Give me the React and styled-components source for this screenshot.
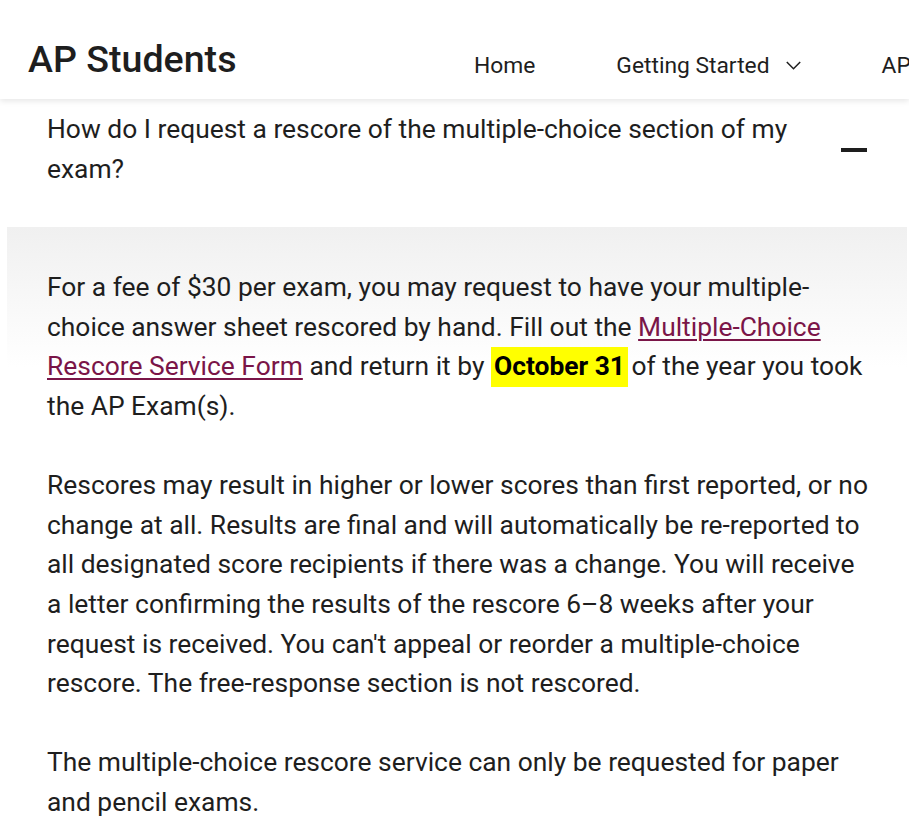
import React from "react";
import styled, { createGlobalStyle } from "styled-components";

const Global = createGlobalStyle`
  html, body { margin: 0; padding: 0; background: #fff; overflow: hidden; }
  body { font-family: Roboto, "Noto Sans", "Liberation Sans", sans-serif; color: #1e1e1e; }
`;

const Header = styled.header`
  position: relative;
  z-index: 2;
  height: 99px;
  background: #fff;
  box-shadow: 0 2px 6px rgba(0, 0, 0, 0.1);
  display: flex;
  align-items: flex-start;
  padding-left: 28px;
  overflow: hidden;
  white-space: nowrap;
`;

const Logo = styled.div`
  font-size: 37.6px;
  font-weight: 500;
  color: #1e1e1e;
  margin-top: 37px;
  flex-shrink: 0;
  width: 446px;
`;

const Nav = styled.nav`
  display: flex;
  align-items: center;
  gap: 81px;
  flex-shrink: 0;
  margin-top: 52px;
`;

const NavItem = styled.a`
  display: flex;
  align-items: center;
  gap: 16px;
  font-size: 22.8px;
  color: #1e1e1e;
  text-decoration: none;
`;

const Chevron = () => (
  <svg width="15" height="9" viewBox="0 0 15 9" fill="none">
    <polyline points="0.8,1 7.5,7.8 14.2,1" stroke="#1e1e1e" strokeWidth="1.5" />
  </svg>
);

const Wrap = styled.main`
  margin-left: 7px;
  width: 900px;
`;

const Question = styled.div`
  display: flex;
  align-items: center;
  padding: 11px 40px 38px;
`;

const QText = styled.div`
  flex: 1;
  font-size: 26.4px;
  line-height: 39.6px;
  padding-right: 40px;
`;

const Minus = styled.span`
  width: 26px;
  height: 4px;
  background: #1e1e1e;
  flex-shrink: 0;
`;

const Panel = styled.section`
  background: linear-gradient(#f0f0f0 0, #ffffff 140px);
  padding: 41px 36px 40px 40px;
  font-size: 26.4px;
  line-height: 39.6px;
`;

const P = styled.p`
  margin: 0;
  & + & {
    margin-top: 39.6px;
  }
`;

const Link = styled.a`
  color: #7a1548;
  text-decoration: underline;
  text-underline-offset: 3px;
  text-decoration-thickness: 1.5px;
`;

const Mark = styled.mark`
  display: inline-block;
  background: #ffff00;
  color: #000;
  font-weight: 700;
  padding: 0 3px;
  margin-right: -3px;
`;

export default function App() {
  return (
    <>
      <Global />
      <Header>
        <Logo>AP Students</Logo>
        <Nav>
          <NavItem>Home</NavItem>
          <NavItem>
            Getting Started <Chevron />
          </NavItem>
          <NavItem>AP Courses and Exams</NavItem>
        </Nav>
      </Header>
      <Wrap>
        <Question>
          <QText>How do I request a rescore of the multiple-choice section of my exam?</QText>
          <Minus />
        </Question>
        <Panel>
          <P>
            For a fee of $30 per exam, you may request to have your multiple-choice answer sheet
            rescored by hand. Fill out the <Link href="#">Multiple-Choice Rescore Service Form</Link>{" "}
            and return it by <Mark>October 31</Mark> of the year you took the AP Exam(s).
          </P>
          <P>
            Rescores may result in higher or lower scores than first reported, or no change at all.
            Results are final and will automatically be re-reported to all designated score
            recipients if there was a change. You will receive a letter confirming the results of
            the rescore 6–8 weeks after your request is received. You can't appeal or reorder a
            multiple-choice rescore. The free-response section is not rescored.
          </P>
          <P>
            The multiple-choice rescore service can only be requested for paper and pencil exams.
          </P>
        </Panel>
      </Wrap>
    </>
  );
}
